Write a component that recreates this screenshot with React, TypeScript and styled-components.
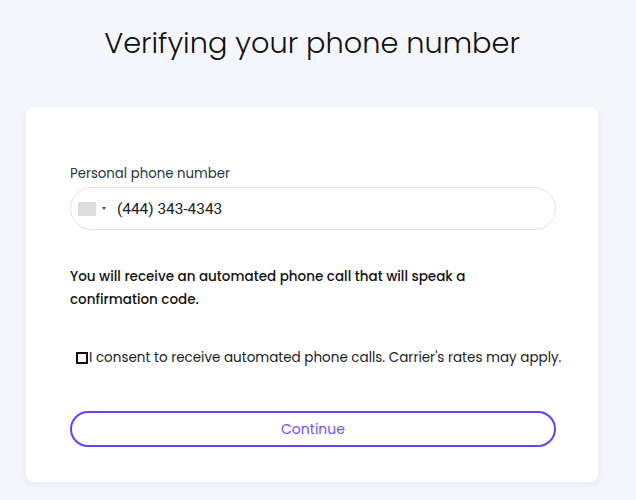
import React from "react";
import styled, { createGlobalStyle } from "styled-components";

const Global = createGlobalStyle`
  html, body { margin: 0; padding: 0; background: #f5f6fb; }
  body { font-family: "Poppins", "Open Sans", "Noto Sans", sans-serif; color: #111; }
  * { box-sizing: border-box; }
`;

const Page = styled.div`
  width: 636px;
  height: 500px;
  padding: 0 38px 0 26px;
  display: flex;
  flex-direction: column;
`;

const Title = styled.h1`
  margin: 0;
  height: 107px;
  padding-top: 23px;
  text-align: center;
  font-weight: 300;
  font-size: 28.8px;
  line-height: 40px;
  color: #111;
`;

const Card = styled.div`
  background: #fff;
  border-radius: 8px;
  box-shadow: 0 2px 6px rgba(40, 50, 120, 0.06);
  padding: 57px 42px 36px 44px;
  height: 375px;
  flex: none;
`;

const Label = styled.div`
  font-size: 13.3px;
  line-height: 20px;
  color: #2b3340;
  margin-bottom: 3px;
`;

const PhoneField = styled.div`
  height: 43px;
  border: 1px solid #e2e2e2;
  border-radius: 22px;
  display: flex;
  align-items: center;
  padding-left: 7px;
`;

const Flag = styled.span`
  width: 18px;
  height: 14px;
  background: #dcdcdc;
  border-radius: 1px;
`;

const Caret = styled.span`
  width: 0;
  height: 0;
  border-left: 2.5px solid transparent;
  border-right: 2.5px solid transparent;
  border-top: 3px solid #444;
  margin: 0 11px 0 6px;
`;

const PhoneInput = styled.input`
  border: none;
  outline: none;
  background: transparent;
  font-family: Roboto, "Noto Sans", sans-serif;
  font-size: 15.4px;
  color: #222;
  flex: 1;
  padding: 0;
`;

const Info = styled.p`
  margin: 35px 0 0;
  font-size: 13.5px;
  font-weight: 500;
  line-height: 23px;
  color: #111;
`;

const Consent = styled.label`
  display: flex;
  align-items: center;
  margin-top: 37px;
  margin-left: 6px;
  margin-right: -10px;
  font-size: 13.5px;
  line-height: 20px;
  color: #222;
  white-space: nowrap;
`;

const Box = styled.span`
  width: 12px;
  height: 12px;
  border: 2px solid #111;
  margin-right: 1px;
  flex: none;
`;

const Button = styled.button`
  display: block;
  width: 100%;
  height: 36px;
  margin-top: 43px;
  border: 2px solid #6a3ff0;
  border-radius: 18px;
  background: #fff;
  color: #7a4cf0;
  font-family: inherit;
  font-size: 14px;
`;

export default function App() {
  return (
    <>
      <Global />
      <Page>
        <Title>Verifying your phone number</Title>
        <Card>
          <Label>Personal phone number</Label>
          <PhoneField>
            <Flag />
            <Caret />
            <PhoneInput defaultValue="(444) 343-4343" />
          </PhoneField>
          <Info>
            You will receive an automated phone call that will speak a
            <br />
            confirmation code.
          </Info>
          <Consent>
            <Box />
            I consent to receive automated phone calls. Carrier's rates may apply.
          </Consent>
          <Button>Continue</Button>
        </Card>
      </Page>
    </>
  );
}
